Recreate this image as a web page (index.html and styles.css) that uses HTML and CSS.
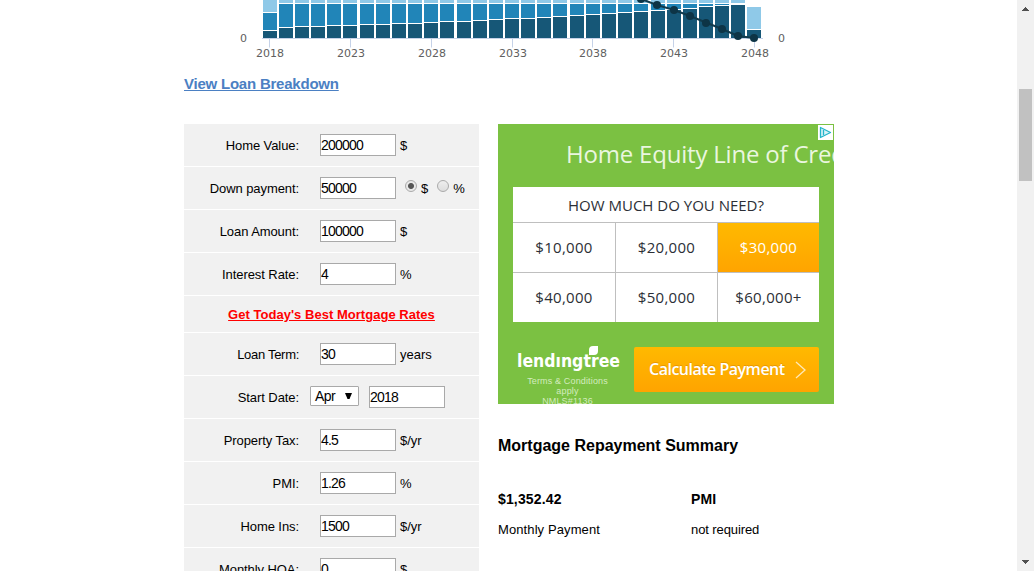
FILE: index.html
```html
<!DOCTYPE html>
<html lang="en">
<head>
<meta charset="utf-8">
<title>Mortgage Calculator</title>
<link rel="stylesheet" href="styles.css">
</head>
<body>
<div class="window">
  <main class="page">
    <svg class="chart" width="651" height="64" viewBox="184 0 651 64">
      <g id="bars" shape-rendering="crispEdges"></g>
      <path d="M262 38.500H763M269.500 39V47.500M350.500 39V47.500M431.500 39V47.500M512.500 39V47.500M592.500 39V47.500M673.500 39V47.500M754.500 39V47.500" stroke="#c5d2e8" fill="none"/>
      <g class="balance">
        <path d="M641-1L657 5L674 10L690 16L706 22.500L722 29L738 36L754 38" fill="none" stroke="#113a4c" stroke-width="2"/>
        <circle cx="641" cy="-1" r="4"/><circle cx="657" cy="5" r="4"/><circle cx="674" cy="10" r="4"/><circle cx="690" cy="16" r="4"/><circle cx="706" cy="23" r="4"/><circle cx="722" cy="29" r="4"/><circle cx="738" cy="36" r="4"/><circle cx="754" cy="38" r="4"/>
      </g>
      <g class="axis">
        <text x="243.500" y="42">0</text><text x="781.500" y="42">0</text>
        <text x="270" y="57">2018</text><text x="351" y="57">2023</text><text x="432" y="57">2028</text><text x="513" y="57">2033</text><text x="593" y="57">2038</text><text x="674" y="57">2043</text><text x="755" y="57">2048</text>
      </g>
    </svg>
    <a class="breakdown">View Loan Breakdown</a>
    <div class="columns">
      <form class="form">
        <div class="row"><label>Home Value:</label><input value="200000"><span class="unit">$</span></div>
        <div class="row"><label>Down payment:</label><input value="50000"><span class="radio on"></span><span class="opt">$</span><span class="radio second"></span><span class="opt">%</span></div>
        <div class="row"><label>Loan Amount:</label><input value="100000"><span class="unit">$</span></div>
        <div class="row"><label>Interest Rate:</label><input value="4"><span class="unit">%</span></div>
        <div class="row promo"><a>Get Today's Best Mortgage Rates</a></div>
        <div class="row"><label class="tight">Loan Term:</label><input value="30"><span class="unit">years</span></div>
        <div class="row date"><label>Start Date:</label><span class="select">Apr<svg width="8" height="7"><path d="M0 0H7L4.500 6H2.500Z"/></svg></span><input value="2018"></div>
        <div class="row"><label>Property Tax:</label><input value="4.5"><span class="unit">$/yr</span></div>
        <div class="row"><label>PMI:</label><input value="1.26"><span class="unit">%</span></div>
        <div class="row"><label>Home Ins:</label><input value="1500"><span class="unit">$/yr</span></div>
        <div class="row"><label>Monthly HOA:</label><input value="0"><span class="unit">$</span></div>
      </form>
      <div class="side">
        <section class="ad">
          <svg class="adchoices" width="15" height="15"><path fill="#fff" d="M0 0H15V15H0Z"/><path d="M2.500 2.500L12.500 7.500L2.500 12.500Z" fill="#d9f3f7" stroke="#25b5cb" stroke-width="1.300" stroke-linejoin="round"/><path d="M5.500 5V10" stroke="#25b5cb" stroke-width="1.300"/></svg>
          <h2>Home Equity Line of Credit</h2>
          <div class="picker">
            <div class="question">HOW MUCH DO YOU NEED?</div>
            <div class="cell">$10,000</div><div class="cell">$20,000</div><div class="cell active">$30,000</div>
            <div class="cell">$40,000</div><div class="cell">$50,000</div><div class="cell">$60,000+</div>
          </div>
          <div class="foot">
            <div class="brand">
              <svg width="106" height="28"><text class="logo" x="0" y="21" textLength="103" lengthAdjust="spacingAndGlyphs">lendıngtree</text><path d="M72 9V4Q72 0 76 0H81V5Q81 9 77 9Z" fill="#fff"/></svg>
              <p>Terms &amp; Conditions<br>apply<br>NMLS#1136</p>
            </div>
            <div class="button"><span>Calculate Payment</span><svg width="12" height="18"><path d="M1 1L10 9L1 17" fill="none" stroke="#ffe9b8" stroke-width="1.300"/></svg></div>
          </div>
        </section>
        <h3>Mortgage Repayment Summary</h3>
        <div class="summary">
          <div><b>$1,352.42</b><p class="payment">Monthly Payment</p></div>
          <div><b>PMI</b><p>not required</p></div>
        </div>
      </div>
    </div>
  </main>
  <aside class="scrollbar">
    <svg width="7" height="4" shape-rendering="crispEdges"><path d="M3 0h1v1h1v1h1v1h1v1H0V3h1V2h1V1h1z"/></svg>
    <div class="thumb"></div>
    <svg width="7" height="4" shape-rendering="crispEdges"><path d="M0 0h7v1H6v1H5v1H4v1H3V3H2V2H1V1H0z"/></svg>
  </aside>
</div>
<script src="chart.js"></script>
</body>
</html>
```
FILE: styles.css
```css
* { box-sizing: border-box; }
body { margin: 0; background: #fff; color: #000; font: 13px "Liberation Sans", Arial, sans-serif; overflow: hidden; }
p, h2, h3 { margin: 0; }
.window { display: flex; justify-content: space-between; height: 571px; overflow: hidden; }
.page { width: 651px; margin-left: 184px; flex: none; }
.chart { display: block; }
.balance { fill: #0d3446; }
.axis { font: 11px "DejaVu Sans", Verdana, sans-serif; fill: #606060; text-anchor: middle; }
.breakdown { display: block; width: max-content; margin-top: 11px; height: 18px; line-height: 18px; font-size: 15px; font-weight: bold; letter-spacing: -0.22px; color: #4b80c3; text-decoration: underline; }
.columns { display: flex; gap: 19px; margin-top: 31px; }
.form { width: 295px; flex: none; }
.row { display: flex; height: 43px; padding-top: 10px; background: #f1f1f1; border-bottom: 1px solid #fff; line-height: 23px; }
.row label { width: 115px; margin-right: 21px; text-align: right; white-space: nowrap; letter-spacing: -0.08px; }
.row label.tight { letter-spacing: -0.3px; }
.row input { width: 76px; height: 22px; margin: 0; padding: 1px 0; border: 1px solid #a9a9a9; border-radius: 0; background: #fff; font: 14px "Liberation Sans", Arial, sans-serif; letter-spacing: -0.78px; }
.unit { margin-left: 4px; }
.radio { width: 12px; height: 12px; margin: 3px 0 0 9px; border: 1px solid #aaa; border-radius: 50%; background: linear-gradient(#eee, #ddd); }
.radio.on { background: radial-gradient(circle, #555 0 2.500px, #e8e8e8 3.500px); }
.radio.second { margin-left: 9px; }
.opt { margin-left: 4px; }
.promo { height: 37px; padding-top: 7px; justify-content: center; }
.promo a { color: #f00; font-weight: bold; text-decoration: underline; letter-spacing: 0.03px; }
.date label { margin-right: 11px; }
.select { display: flex; align-items: center; justify-content: space-between; width: 49px; height: 20px; margin-right: 10px; padding: 0 5px 0 4px; border: 1px solid #a9a9a9; border-radius: 1px; background: #fff; font-size: 14px; letter-spacing: -0.6px; }
.side { width: 336px; }
.ad { position: relative; height: 280px; overflow: hidden; padding: 13px 15px 0; background: #7bc142; font-family: "Open Sans", sans-serif; }
.adchoices { position: absolute; top: 1px; right: 1px; }
.ad h2 { height: 50px; padding-left: 53px; margin-right: -15px; overflow: hidden; white-space: nowrap; font-size: 24px; line-height: 34px; font-weight: 400; letter-spacing: -0.2px; color: #eaf6df; }
.picker { display: grid; grid-template-columns: 102px 1px 101px 1px 101px; grid-template-rows: 35px 1px 49px 1px 49px; background: #bfbfbf; color: #2c2f36; text-align: center; font-size: 15px; }
.question { grid-column: 1 / -1; grid-row: 1; background: #fff; line-height: 37px; }
.cell { background: #fff; line-height: 48px; grid-row: 3; letter-spacing: 0.3px; }
.cell:nth-child(3n+2) { grid-column: 1; }
.cell:nth-child(3n) { grid-column: 3; }
.cell:nth-child(3n+1) { grid-column: 5; }
.cell:nth-child(n+5) { grid-row: 5; }
.cell.active { background: linear-gradient(#ffb900, #ffa400); color: #fff; }
.foot { display: flex; margin-top: 24px; }
.brand { width: 121px; flex: none; padding-left: 4px; }
.brand svg { display: block; }
.logo { font: bold 18px "DejaVu Sans", sans-serif; fill: #fff; }
.brand p { width: 101px; margin-top: 2px; text-align: center; font: 9px/10px "Liberation Sans", Arial, sans-serif; letter-spacing: 0.15px; color: #d3ecbe; }
.button { display: flex; align-items: center; justify-content: space-between; width: 185px; height: 45px; margin-top: 1px; padding: 0 12px 0 15px; border-radius: 2px; background: linear-gradient(#ffb900, #ffa400); color: #fff; font-size: 16px; font-weight: 600; letter-spacing: -0.5px; text-shadow: 0 -1px #e79800; }
.button span { white-space: nowrap; margin-top: -2px; }
h3 { margin-top: 32px; font-size: 16px; line-height: 20px; }
.summary { display: flex; margin-top: 34px; }
.summary > div { width: 193px; flex: none; }
.summary b { display: block; font-size: 14px; line-height: 18px; letter-spacing: 0.15px; }
.summary p { margin-top: 12px; line-height: 20px; letter-spacing: -0.1px; }
.summary .payment { letter-spacing: 0.1px; }
.scrollbar { display: flex; flex-direction: column; align-items: center; width: 17px; padding: 7px 0 7px; background: #f1f1f1; }
.scrollbar svg { fill: #505050; }
.thumb { width: 13px; height: 92px; margin: 78px 0 auto; background: #c1c1c1; }
```
FILE: chart.js
```javascript
const left = [263,279,295,311,327,343,360,376,392,408,424,440,457,473,489,505,521,537,553,570,586,602,618,634,651,667,683,699,715,731,747];
const principal = [31,28,27,27,26,26,25,25,24,24,23,22,22,21,20,19,19,18,17,16,15,14,13,12,11,10,9,7,6,5,30];
const bars = document.getElementById('bars');

function rect(x, top, bottom, color) {
  if (bottom <= top) return;
  const r = document.createElementNS('http://www.w3.org/2000/svg', 'rect');
  r.setAttribute('x', x);
  r.setAttribute('y', top);
  r.setAttribute('width', 14);
  r.setAttribute('height', bottom - top);
  r.setAttribute('fill', color);
  bars.appendChild(r);
}

left.forEach((x, i) => {
  const last = i === left.length - 1;
  const interest = i === 0 ? 13 : 4;
  rect(x, last ? 7 : 0, last ? 29 : interest - 1, '#8fc9e8');
  if (!last) rect(x, interest, principal[i] - 1, '#2185b8');
  rect(x, principal[i], 38, '#165777');
});
```
